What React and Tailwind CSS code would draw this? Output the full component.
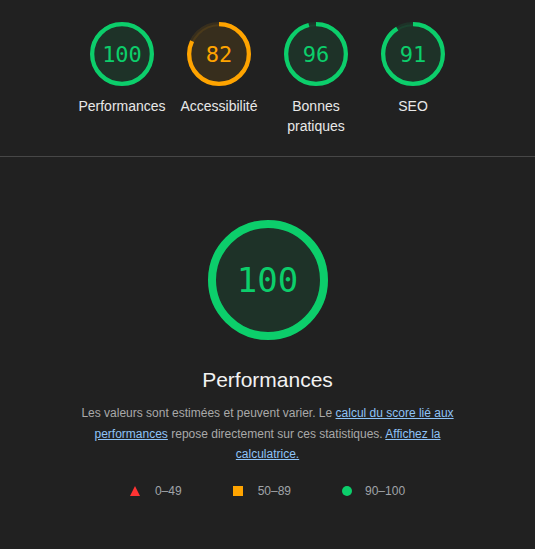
import React from "react";

const COLORS = {
  pass: { stroke: "#0cce6b", fill: "rgba(12,206,107,0.1)", text: "text-[#0cce6b]" },
  average: { stroke: "#ffa400", fill: "rgba(255,164,0,0.1)", text: "text-[#ffa400]" },
};

const categories = [
  { label: "Performances", score: 100 },
  { label: "Accessibilité", score: 82 },
  { label: "Bonnes pratiques", score: 96 },
  { label: "SEO", score: 91 },
];

const rating = (score) => (score >= 90 ? "pass" : "average");

const Gauge = ({ score, size, textClass }) => {
  const c = COLORS[rating(score)];
  const circumference = 2 * Math.PI * 56;
  return (
    <div className="relative" style={{ width: size, height: size }}>
      <svg viewBox="0 0 120 120" width={size} height={size}>
        <circle cx="60" cy="60" r="56" fill={c.fill} stroke={c.fill} strokeWidth="8" />
        <circle
          cx="60"
          cy="60"
          r="56"
          fill="none"
          stroke={c.stroke}
          strokeWidth="8"
          strokeDasharray={`${(score / 100) * circumference} ${circumference}`}
          transform="rotate(-90 60 60)"
        />
      </svg>
      <div
        className={`absolute inset-0 flex items-center justify-center font-['DejaVu_Sans_Mono',monospace] ${c.text} ${textClass}`}
      >
        {score}
      </div>
    </div>
  );
};

const App = () => {
  return (
    <div className="min-h-[549px] w-full bg-[#212121] font-['Liberation_Sans',Arial,sans-serif]">
      <div className="flex justify-center pt-[22px] pb-[20px] border-b border-[#474747]">
        {categories.map((cat) => (
          <div key={cat.label} className="w-[97px] flex flex-col items-center">
            <Gauge score={cat.score} size={64} textClass="text-[22px]" />
            <div className="mt-[10px] text-[14px] leading-[20px] text-center text-[#e8e8e8]">
              {cat.label}
            </div>
          </div>
        ))}
      </div>

      <div className="flex flex-col items-center pt-[63px]">
        <Gauge score={100} size={120} textClass="text-[34px]" />
        <div className="mt-[26px] text-[21px] leading-[28px] text-[#f2f2f2]">Performances</div>
        <p className="mt-[9px] max-w-[400px] text-center text-[12px] leading-[20.5px] text-[#a9a9a9]">
          Les valeurs sont estimées et peuvent varier. Le{" "}
          <a href="#" className="text-[#8ec3f7] underline">
            calcul du score lié aux performances
          </a>{" "}
          repose directement sur ces statistiques.{" "}
          <a href="#" className="text-[#8ec3f7] underline">
            Affichez la calculatrice.
          </a>
        </p>
        <div className="mt-[18px] flex items-center gap-[51px] text-[12px] leading-[16px] text-[#a0a4a8]">
          <div className="flex items-center gap-[15px]">
            <svg width="10" height="10" viewBox="0 0 10 10">
              <polygon points="5,0 10,10 0,10" fill="#ff3333" />
            </svg>
            <span>0–49</span>
          </div>
          <div className="flex items-center gap-[15px]">
            <span className="block w-[10px] h-[10px] bg-[#ffa400]" />
            <span>50–89</span>
          </div>
          <div className="flex items-center gap-[13px]">
            <span className="block w-[10px] h-[10px] rounded-full bg-[#0cce6b]" />
            <span>90–100</span>
          </div>
        </div>
      </div>
    </div>
  );
};

export default App;
